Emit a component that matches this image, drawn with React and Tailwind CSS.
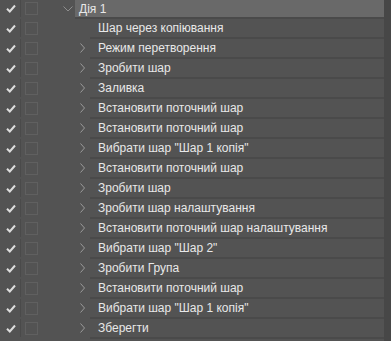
import React from "react";

const rows = [
  { t: "Шар через копіювання", c: false },
  { t: "Режим перетворення", c: true },
  { t: "Зробити шар", c: true },
  { t: "Заливка", c: true },
  { t: "Встановити поточний шар", c: true },
  { t: "Встановити поточний шар", c: true },
  { t: "Вибрати шар \"Шар 1 копія\"", c: true },
  { t: "Встановити поточний шар", c: true },
  { t: "Зробити шар", c: true },
  { t: "Зробити шар налаштування", c: true },
  { t: "Встановити поточний шар налаштування", c: true },
  { t: "Вибрати шар \"Шар 2\"", c: true },
  { t: "Зробити Група", c: true },
  { t: "Встановити поточний шар", c: true },
  { t: "Вибрати шар \"Шар 1 копія\"", c: true },
  { t: "Зберегти", c: true },
];

function Check() {
  return (
    <svg width="10" height="9" viewBox="0 0 10 9">
      <path d="M1 4.8 L3.8 7.5 L9 1.5" fill="none" stroke="#dcdcdc" strokeWidth="2" />
    </svg>
  );
}

function Box() {
  return <div className="w-[13px] h-[13px] border border-[#606060]" />;
}

function Left({ h }) {
  return (
    <>
      <div className={`w-[21px] border-r border-[#4a4a4a] flex items-center justify-center pl-[1px] ${h}`}>
        <Check />
      </div>
      <div className={`w-[21px] flex items-center pl-[4px] ${h}`}>
        <Box />
      </div>
    </>
  );
}

export default function App() {
  return (
    <div
      className="w-[391px] h-[341px] bg-[#535353] flex overflow-hidden text-[12px] text-[#e8e8e8]"
      style={{ fontFamily: "'Liberation Sans', Arial, sans-serif" }}
    >
      <div className="flex-1 flex flex-col">
        <div className="flex h-[19px] shrink-0">
          <Left h="h-[17px]" />
          <div className="w-[18px]" />
          <div className="w-[15px] h-[17px] flex items-center pl-[3px]">
            <svg width="10" height="6" viewBox="0 0 10 6">
              <path d="M0.5 0.5 L5 5 L9.5 0.5" fill="none" stroke="#8e8e8e" strokeWidth="1" />
            </svg>
          </div>
          <div className="flex-1 h-[19px] bg-[#696969] border-b-2 border-[#4a4a4a] flex items-center pl-[4px]">
            Дія 1
          </div>
        </div>
        {rows.map((r, i) => (
          <div key={i} className="flex h-[20px] shrink-0">
            <Left h="h-[18px]" />
            <div className="w-[33px]" />
            <div className="w-[15px] h-[18px] flex items-center pl-[5px]">
              {r.c && (
                <svg width="5" height="10" viewBox="0 0 5 10">
                  <path d="M0.5 0.5 L4.5 5 L0.5 9.5" fill="none" stroke="#9a9a9a" strokeWidth="1" />
                </svg>
              )}
            </div>
            <div className="flex-1 h-[20px] border-b-2 border-[#4a4a4a] flex items-center pl-[8px] whitespace-nowrap">
              {r.t}
            </div>
          </div>
        ))}
      </div>
      <div className="w-[7px] bg-[#474747]" />
    </div>
  );
}
